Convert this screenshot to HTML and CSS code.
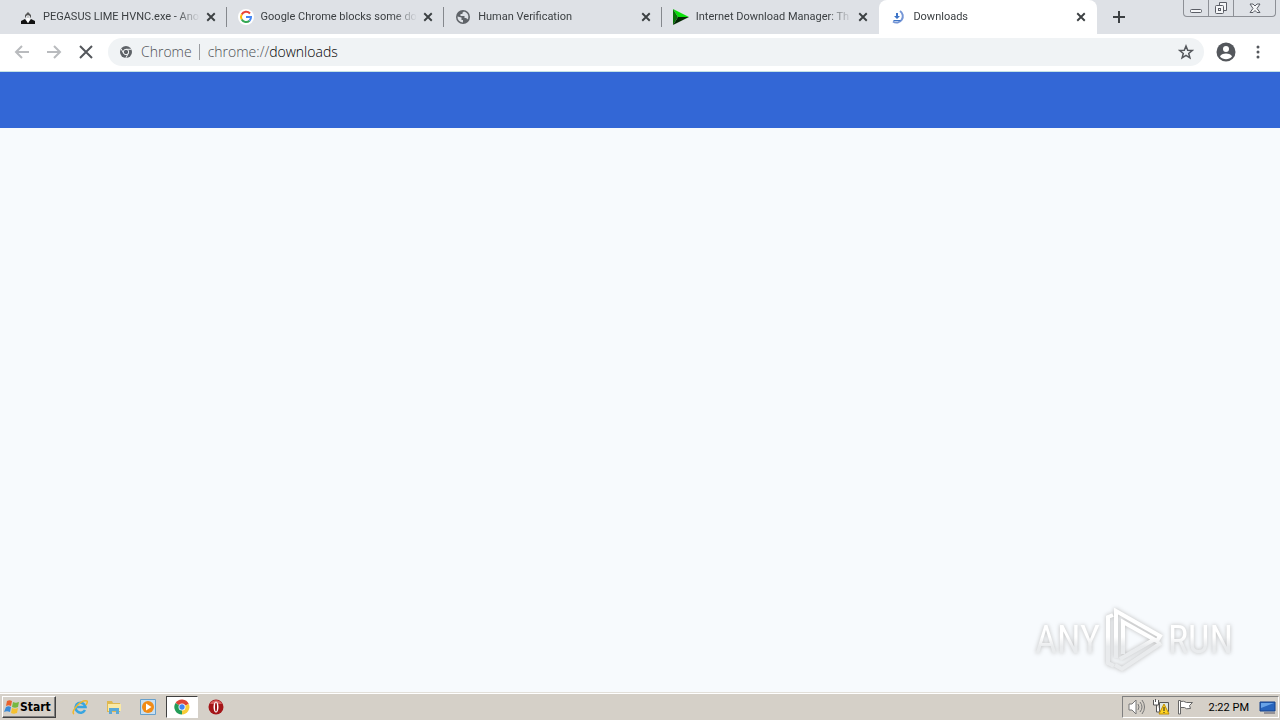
FILE: index.html
```html
<!DOCTYPE html>
<html lang="en">

<head>
    <meta charset="UTF-8">
    <meta name="viewport" content="width=device-width, initial-scale=1.0">
    <title>Downloads</title>
    <link rel="stylesheet" href="styles.css">
</head>

<body>
    <header class="browser">
        <div class="tabstrip">
            <nav class="tabs">
                <div class="tab">
                    <svg class="favicon" viewBox="0 0 16 16"><path d="M1 15v-3l4-2 3 4 3-4 4 2v3z" fill="#111"/><path d="M6 10l2-2 2 2-2 4z" fill="#fff"/><path d="M5 8V6l3-3 3 3v2l-1 1V7L8 6 6 7v2z" fill="#555"/><path d="M7 7h2v2H7z" fill="#ccc"/></svg>
                    <a class="tab-title" href="#">PEGASUS LIME HVNC.exe - Anon</a>
                    <button class="tab-close" aria-label="Close tab"><svg viewBox="0 0 8 8"><path d="M1 1l6 6M7 1L1 7"/></svg></button>
                </div>
                <div class="tab">
                    <svg class="favicon" viewBox="0 0 16 16"><circle cx="8" cy="8" r="8" fill="#fff"/><g fill="none" stroke-width="2"><path d="M12 4.5A5 5 0 0 0 3.7 5.5" stroke="#ea4335"/><path d="M3.7 5.5a5 5 0 0 0 0 5" stroke="#fbbc05"/><path d="M3.7 10.5a5 5 0 0 0 7.8 1.2" stroke="#34a853"/><path d="M11.5 11.7A5 5 0 0 0 13 8H8" stroke="#4285f4"/></g></svg>
                    <a class="tab-title" href="#">Google Chrome blocks some dow</a>
                    <button class="tab-close" aria-label="Close tab"><svg viewBox="0 0 8 8"><path d="M1 1l6 6M7 1L1 7"/></svg></button>
                </div>
                <div class="tab">
                    <svg class="favicon" viewBox="0 0 16 16"><circle cx="8" cy="8" r="7" fill="#5f6368"/><path d="M9 2.5c-1 .5-2 1-1.500 2.500H5.500v2h4v2h1c1 0 1.500.5 1.500 1.500l1.200-1A5.600 5.600 0 0 0 9 2.500zM2.500 7.500l4 1v2.500H8v2.500A5.600 5.600 0 0 1 2.500 7.500z" fill="#dee1e6"/></svg>
                    <a class="tab-title" href="#">Human Verification</a>
                    <button class="tab-close" aria-label="Close tab"><svg viewBox="0 0 8 8"><path d="M1 1l6 6M7 1L1 7"/></svg></button>
                </div>
                <div class="tab">
                    <svg class="favicon" viewBox="0 0 16 16"><path d="M0 0l16 8H5z" fill="#0be00b"/><path d="M0 0l5 8-5 8z" fill="#087008"/><path d="M0 16l5-8h11z" fill="#032803"/></svg>
                    <a class="tab-title" href="#">Internet Download Manager: Th</a>
                    <button class="tab-close" aria-label="Close tab"><svg viewBox="0 0 8 8"><path d="M1 1l6 6M7 1L1 7"/></svg></button>
                </div>
                <div class="tab active">
                    <svg class="favicon" viewBox="0 0 16 16"><path d="M10 2a6.300 6.300 0 1 1-7 10.500" fill="none" stroke="#7596d6" stroke-width="2"/><path d="M6 4h2v3h2L7 10 4 7h2zM3.500 11h7v1h-7z" fill="#3d74c7"/></svg>
                    <a class="tab-title" href="#">Downloads</a>
                    <button class="tab-close" aria-label="Close tab"><svg viewBox="0 0 8 8"><path d="M1 1l6 6M7 1L1 7"/></svg></button>
                </div>
            </nav>
            <button class="new-tab" aria-label="New tab"><svg viewBox="0 0 12 12"><path d="M6 0v12M0 6h12"/></svg></button>
            <div class="window-buttons">
                <button aria-label="Minimize"><svg viewBox="0 0 14 14"><rect x="1.500" y="8.500" width="11" height="3" rx="1"/></svg></button>
                <button aria-label="Restore"><svg viewBox="0 0 14 14"><path d="M5.500 4V1.500h7v8H10"/><rect x="1.500" y="4.500" width="8" height="8" rx="1"/><rect x="4.500" y="7.500" width="2" height="2"/></svg></button>
                <button class="close" aria-label="Close"><svg viewBox="0 0 14 14"><path d="M2 3h3l2 2 2-2h3L9 7.500l3 4H9l-2-2-2 2H2l3-4z"/></svg></button>
            </div>
        </div>
        <div class="toolbar">
            <button class="nav-button faded" aria-label="Back"><svg viewBox="0 0 16 16"><path d="M15 8H2M8 2L2 8l6 6"/></svg></button>
            <button class="nav-button faded" aria-label="Forward"><svg viewBox="0 0 16 16"><path d="M1 8h13M8 2l6 6-6 6"/></svg></button>
            <button class="nav-button" aria-label="Stop"><svg viewBox="0 0 16 16"><path d="M2 2l12 12M14 2L2 14"/></svg></button>
            <div class="omnibox">
                <svg class="page-icon" viewBox="0 0 14 14"><circle cx="7" cy="7" r="6" fill="#5f6368"/><circle cx="7" cy="7" r="2.700" fill="none" stroke="#f1f3f4"/><path d="M7 4.300h5.500M4.700 8.400L2 3.700M9.300 8.400L6.800 13" stroke="#f1f3f4"/></svg>
                <span class="origin">Chrome</span>
                <a class="url" href="#">chrome://<span class="path">downloads</span></a>
                <button class="star" aria-label="Bookmark this tab"><svg viewBox="0 0 16 16"><path d="M8 2l1.700 4.200 4.500.3-3.500 2.900 1.200 4.400L8 11.300l-3.900 2.500 1.200-4.400-3.500-2.900 4.500-.3z"/></svg></button>
            </div>
            <button class="profile" aria-label="Profile"><svg viewBox="0 0 20 20"><circle cx="10" cy="10" r="9.500" fill="#54575c"/><circle cx="10" cy="7" r="3" fill="#fff"/><path d="M4 14.500c1-4 11-4 12 0-3 3.500-9 3.500-12 0z" fill="#fff"/></svg></button>
            <button class="more" aria-label="Menu"><svg viewBox="0 0 4 16"><circle cx="2" cy="3" r="1.500"/><circle cx="2" cy="8" r="1.500"/><circle cx="2" cy="13" r="1.500"/></svg></button>
        </div>
    </header>

    <main class="page">
        <div class="page-header"></div>
        <div class="watermark">
            <span>ANY</span>
            <svg viewBox="0 0 60 64">
                <defs>
                    <linearGradient id="fade" gradientUnits="userSpaceOnUse" x1="0" y1="0" x2="0" y2="64">
                        <stop offset="0.45" stop-color="#fff"/>
                        <stop offset="0.6" stop-color="#e9ebed"/>
                    </linearGradient>
                </defs>
                <path d="M9 7L4 9v46l6 3M12 50V3l44 25-3 5-34-19v32M57 35L18 61l-7-4M16 51l35-20" stroke="url(#fade)"/>
            </svg>
            <span>RUN</span>
        </div>
    </main>

    <footer class="taskbar">
        <button class="start">
            <svg viewBox="0 0 16 16"><path d="M3 2c2-1 3-1 5 0L7 7C5 6 4 6 2 7z" fill="#e8612c"/><path d="M9 3c2 1 3 1 6 0l-1 5c-2 1-4 1-6 0z" fill="#76b83f"/><path d="M2 8c2-1 3-1 5 0l-1 5c-2-1-4-1-6 0z" fill="#398ad7"/><path d="M8 9c2 1 4 1 6 0l-1 5c-3 1-4 1-6 0z" fill="#f5c130"/></svg>
            Start
        </button>
        <div class="tasks">
            <button class="task" aria-label="Internet Explorer"><svg viewBox="0 0 16 16"><path d="M13 11a5 5 0 1 1 .5-3H5" fill="none" stroke="#38a5e0" stroke-width="2.500"/><path d="M2 15C-2 13 9 0 15 2c1 1 0 2-1 4" fill="none" stroke="#efb72d" stroke-width="1.500"/></svg></button>
            <button class="task" aria-label="Explorer"><svg viewBox="0 0 16 16"><path d="M1 2h5l1 2h7v9H1z" fill="#dfb850"/><path d="M2 5h13v7H2z" fill="#fae9a4"/><path d="M3 15V9h10v6h-3v-3H6v3z" fill="#5aa8d6"/></svg></button>
            <button class="task" aria-label="Media Player"><svg viewBox="0 0 16 16"><path d="M.5.500h15v15H.500z" fill="#c8dff1" stroke="#66a0cc"/><circle cx="8" cy="8" r="6" fill="#f18b16"/><path d="M6 4.500L11.500 8 6 11.500z" fill="#fff"/></svg></button>
            <button class="task pressed" aria-label="Chrome"><svg viewBox="0 0 16 16"><path d="M8 8L1.500 4A7.500 7.500 0 0 1 14.800 5z" fill="#df4437"/><path d="M8 8l6.800-3A7.500 7.500 0 0 1 8 15.500z" fill="#f8cc38"/><path d="M8 8v7.500A7.500 7.500 0 0 1 1.500 4z" fill="#239c58"/><circle cx="8" cy="8" r="3.500" fill="#fff"/><circle cx="8" cy="8" r="2.700" fill="#4285f4"/></svg></button>
            <button class="task" aria-label="Opera"><svg viewBox="0 0 16 16"><circle cx="8" cy="8" r="7.500" fill="#a41518"/><path d="M2 5C4 0 12 0 14 5z" fill="#d75d5d"/><ellipse cx="8" cy="8" rx="2.500" ry="5.500" fill="#fff"/><ellipse cx="8" cy="8" rx="1" ry="4.500" fill="#991216"/></svg></button>
        </div>
        <div class="tray">
            <svg viewBox="0 0 18 16"><path d="M1 5h3l4-4v14l-4-4H1z" fill="#fff" stroke="#777"/><path d="M10 5q2 3 0 6M12 3q4 5 0 10M14 1q5 7 0 14" fill="none" stroke="#777"/></svg>
            <svg viewBox="0 0 18 16"><path d="M1.500 1v5h5V1M3.500 0v3M4.500 6v7h5" fill="#fff" stroke="#555"/><path d="M7.500 3.500h9v9h-9z" fill="#dce5df" stroke="#555"/><path d="M12 5l5 10H7z" fill="#ffd421" stroke="#c18e00"/><path d="M12 8v4M12 13v1" stroke="#222"/></svg>
            <svg viewBox="0 0 18 16"><path d="M2.500 15V1.500h2V15z" fill="#fff" stroke="#666"/><path d="M4.500 2.500q3-1 6 1h6l-3 3 1 3q-5 1-6-1h-4z" fill="#fff" stroke="#666"/></svg>
            <time class="clock">2:22 PM</time>
            <svg viewBox="0 0 18 16"><path d="M1 3h15v9H1z" fill="#2865bd" stroke="#17428a"/><path d="M2 4h13L2 9z" fill="#68a3e7"/><path d="M5 14h11" stroke="#556"/></svg>
        </div>
    </footer>
</body>

</html>
```
FILE: styles.css
```css
html {
    box-sizing: border-box;
    font-family: "DejaVu Sans Condensed", "DejaVu Sans", sans-serif;
    font-size: 11px;
}

*,
*:before,
*:after {
    box-sizing: inherit;
}

body {
    margin: 0;
    min-height: 100vh;
    display: flex;
    flex-direction: column;
}

button {
    margin: 0;
    padding: 0;
    border: 0;
    background: none;
    font: inherit;
    color: inherit;
}

a {
    color: inherit;
    text-decoration: none;
}

svg {
    display: block;
    flex-shrink: 0;
}

/* Tabs */
.tabstrip {
    display: flex;
    height: 34px;
    padding-left: 9px;
    background: #dee1e6;
}

.tabs {
    display: flex;
    flex: 0 1 1088px;
    min-width: 0;
}

.tab {
    display: flex;
    flex: 1;
    min-width: 0;
    align-items: center;
    padding: 0 11px;
    color: #3c4043;
    background: linear-gradient(#85888d, #85888d) right center / 1px 20px no-repeat;
}

.tab:nth-last-child(2) {
    background: none;
}

.favicon {
    width: 16px;
    height: 16px;
    margin-right: 7px;
}

.tab-title {
    flex: 1;
    overflow: hidden;
    white-space: nowrap;
    font-family: Roboto, "Noto Sans", sans-serif;
    line-height: 16px;
    -webkit-mask-image: linear-gradient(to right, #000 calc(100% - 24px), transparent);
    mask-image: linear-gradient(to right, #000 calc(100% - 24px), transparent);
}

.tab-close {
    width: 10px;
    margin-left: 6px;
}

.tab-close svg {
    width: 10px;
    height: 10px;
    stroke: #3c4043;
    stroke-width: 1.5;
}

.tab.active {
    background: #fff;
    border-radius: 8px 8px 0 0;
}

.new-tab {
    width: 44px;
}

.new-tab svg {
    width: 12px;
    height: 12px;
    margin: 0 auto;
    stroke: #3c4043;
    stroke-width: 2;
}

.window-buttons {
    display: flex;
    height: 17px;
    margin-left: auto;
    margin-right: 4px;
    border: 1px solid #8d9096;
    border-top: 0;
    border-radius: 0 0 4px 4px;
}

.window-buttons button {
    width: 25px;
    border-right: 1px solid #8d9096;
}

.window-buttons .close {
    width: 41px;
    border: 0;
}

.window-buttons svg {
    width: 14px;
    height: 14px;
    margin: 0 auto;
    fill: #f5f6f8;
    stroke: #5b5e66;
}

/* Toolbar */
.toolbar {
    display: flex;
    align-items: center;
    height: 38px;
    padding: 0 12px 2px 6px;
    background: #fff;
    border-bottom: 1px solid #c5e3e4;
}

.nav-button {
    width: 32px;
}

.nav-button svg {
    width: 16px;
    height: 16px;
    margin: 0 auto;
    fill: none;
    stroke: #54575c;
    stroke-width: 2;
}

.nav-button.faded svg {
    stroke: #b9bbbe;
}

.omnibox {
    display: flex;
    flex: 1;
    align-items: center;
    height: 28px;
    margin-left: 6px;
    padding: 0 10px 0 11px;
    border-radius: 14px;
    background: #f0f3f5;
    color: #4c4f54;
    font-family: "Open Sans", "Noto Sans", sans-serif;
    font-size: 14px;
    font-weight: 300;
}

.page-icon {
    width: 14px;
    height: 14px;
    margin-right: 8px;
}

.origin {
    padding-right: 7px;
    line-height: 16px;
    border-right: 1px solid #9b9da1;
}

.url {
    padding-left: 8px;
}

.path {
    color: #000;
}

.star {
    margin-left: auto;
}

.star svg {
    width: 16px;
    height: 16px;
    fill: none;
    stroke: #54575c;
    stroke-width: 1.5;
}

.profile {
    margin-left: 12px;
}

.profile svg {
    width: 20px;
    height: 20px;
}

.more {
    width: 20px;
    margin-left: 12px;
}

.more svg {
    width: 4px;
    height: 16px;
    margin: 0 auto;
    fill: #54575c;
}

/* Page */
.page {
    position: relative;
    flex-grow: 1;
    background: #f7fafd;
}

.page-header {
    height: 56px;
    background: #3367d6;
}

.watermark {
    position: absolute;
    right: 47px;
    bottom: 20px;
    display: flex;
    align-items: center;
    gap: 4px;
    font-family: "Roboto Condensed", "Liberation Sans Narrow", sans-serif;
    font-size: 38px;
    line-height: 64px;
    filter: drop-shadow(0 0 2px #bbb);
}

.watermark span {
    color: transparent;
    background: linear-gradient(#fff 45%, #e9ebed 60%);
    -webkit-background-clip: text;
    background-clip: text;
}

.watermark svg {
    width: 60px;
    height: 64px;
    fill: none;
    stroke-width: 4;
}

/* Taskbar */
.taskbar {
    display: flex;
    align-items: center;
    height: 28px;
    padding: 1px 1px 0 2px;
    background: #d5d0c8;
    border-top: 1px solid #e2dfd9;
    box-shadow: inset 0 1px #fff;
}

.start {
    display: flex;
    align-items: center;
    height: 22px;
    padding: 0 4px 0 1px;
    border: 1px solid;
    border-color: #fff #404040 #404040 #fff;
    box-shadow: inset -1px -1px #808080;
    color: #000;
    font-size: 12px;
    font-weight: bold;
}

.start svg,
.task svg {
    width: 16px;
    height: 16px;
}

.tasks {
    display: flex;
    gap: 2px;
    margin-left: 8px;
}

.task {
    display: flex;
    align-items: center;
    justify-content: center;
    width: 32px;
    height: 22px;
}

.task.pressed {
    background: #fff;
    border: 1px solid;
    border-color: #404040 #fff #fff #404040;
}

.tray {
    display: flex;
    align-items: center;
    gap: 6px;
    height: 22px;
    margin-left: auto;
    padding: 0 1px 0 5px;
    border: 1px solid;
    border-color: #808080 #fff #fff #808080;
    color: #000;
}

.tray svg {
    width: 18px;
    height: 16px;
}

.clock {
    margin: 0 4px 0 9px;
    font-family: Roboto, "Noto Sans", sans-serif;
}
```
